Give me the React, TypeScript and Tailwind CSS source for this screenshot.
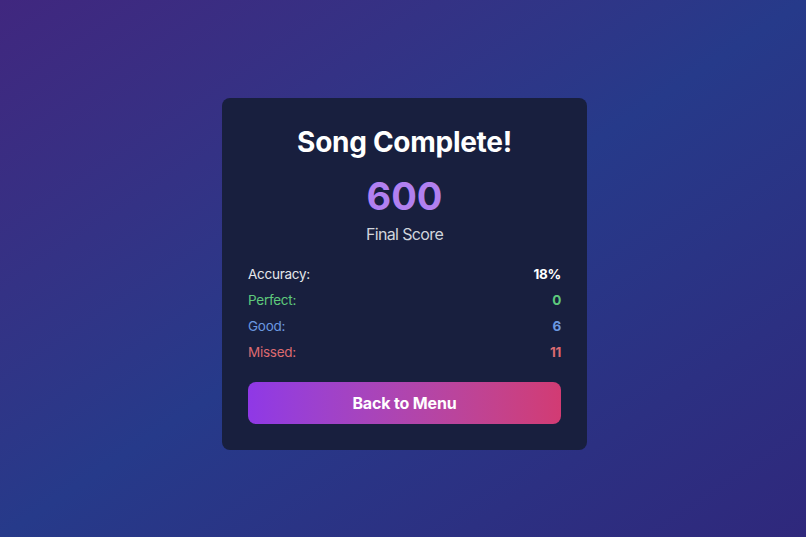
export default function App() {
  const stats = [
    { label: "Accuracy:", value: "18%", labelClass: "text-gray-200", valueClass: "text-white" },
    { label: "Perfect:", value: "0", labelClass: "text-[#5ec97c]", valueClass: "text-[#5ec97c]" },
    { label: "Good:", value: "6", labelClass: "text-[#6b98e0]", valueClass: "text-[#6b98e0]" },
    { label: "Missed:", value: "11", labelClass: "text-[#dc6a70]", valueClass: "text-[#dc6a70]" },
  ];

  return (
    <div
      className="min-h-screen w-full flex items-center justify-center pt-[10px] pl-[3px] bg-gradient-to-br from-[#40277f] via-[#263a8a] to-[#2f287c]"
      style={{ fontFamily: "Inter, 'Noto Sans', sans-serif" }}
    >
      <div className="w-[365px] rounded-lg bg-[#181f3e] p-[26px]">
        <h1 className="text-center text-[28px] leading-9 tracking-[-0.01em] font-bold text-white mb-4">
          Song Complete!
        </h1>
        <div className="text-center text-[38px] leading-10 font-bold text-[#b180f0] mb-1">600</div>
        <div className="text-center text-base leading-7 tracking-[-0.04em] text-gray-300 mb-4">Final Score</div>

        <div className="flex flex-col gap-1.5">
          {stats.map((s) => (
            <div key={s.label} className="flex justify-between text-[13.5px] leading-5 tracking-[-0.02em]">
              <span className={s.labelClass}>{s.label}</span>
              <span className={`font-bold ${s.valueClass}`}>{s.value}</span>
            </div>
          ))}
        </div>

        <button className="mt-5 w-full h-[42px] rounded-lg bg-gradient-to-r from-[#8f38e6] to-[#d23b73] text-base tracking-[-0.01em] font-bold text-white">
          Back to Menu
        </button>
      </div>
    </div>
  );
}
